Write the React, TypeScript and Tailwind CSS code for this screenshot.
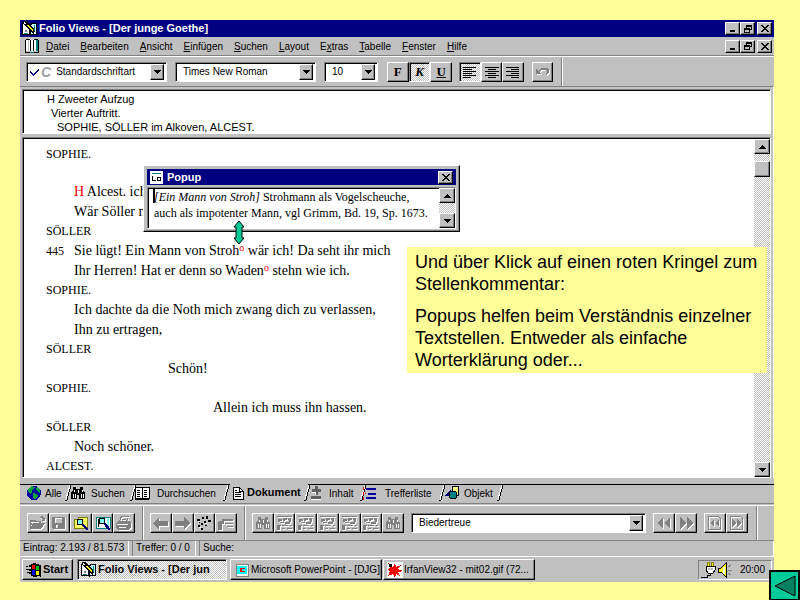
import React from 'react';
import clsx from 'clsx';

const raised = 'bg-[#c0c0c0] border border-t-white border-l-white border-r-black border-b-black shadow-[inset_-1px_-1px_0_#808080]';
const sunken = 'border border-t-[#808080] border-l-[#808080] border-r-white border-b-white shadow-[inset_1px_1px_0_#000]';
const dither = 'bg-[repeating-conic-gradient(#ffffff_0_25%,#c0c0c0_0_50%)] bg-[length:2px_2px]';

interface IconProps {
  children: React.ReactNode;
  size?: string;
  box?: string;
}

const Icon: React.FC<IconProps> = ({ children, size = 'w-4 h-4', box = '0 0 16 16' }) => (
  <svg viewBox={box} className={clsx('shrink-0', size)} shapeRendering="crispEdges" aria-hidden="true">
    {children}
  </svg>
);

const FolioIcon = () => (
  <Icon>
    <path d="M0 2h6l2 1 2-1h5v12H9l-1 1-1-1H0z" fill="#000" />
    <path d="M1 3h5l1 1v9H1z" fill="#fff" />
    <path d="M9 4l1-1h4v10H9z" fill="#c0ffff" />
    <path d="M12 4h1v8h-1zM2 12h4v1H2z" fill="#008080" />
    <path d="M1 0h3l8 8 2 6-5-3-7-8z" fill="#000" />
    <path d="M5 4l6 6M6 4l5 5" stroke="#ffff00" />
    <path d="M2 1h1v1h1v1H2zM12 11h1v2h-1z" fill="#fff" />
    <path d="M3 9h2v2H3z" fill="#808080" />
  </Icon>
);

const BookIcon = () => (
  <Icon>
    <path d="M1 3h1v11h12V3h1v12H1z" fill="#008080" />
    <path d="M2 1h5l1 2v11l-1-1H2z" fill="#fff" />
    <path d="M14 1H9L8 3v11l1-1h5z" fill="#fff" />
    <path d="M1 2h1v12H1zM2 1h4v1H2zM6 2h1v11H6zM9 2h1v11H9zM10 1h4v1h-4zM14 2h1v12h-1zM1 14h5v1H1zM10 14h5v1h-5z" fill="#000" />
    <path d="M12 2h2v11h-2z" fill="#008080" />
    <path d="M4 2h1v11H4z" fill="#c0c0c0" />
  </Icon>
);

const Globe = () => (
  <Icon>
    <circle cx="8" cy="8" r="7" fill="#0000a0" />
    <path d="M2 4l3-3 4 1-1 2-2 1v3l-2 1-2-2zM7 8l4 1 1 2-3 4-2-3zM11 2l3 3v4l-2-2-2-3z" fill="#00a040" />
  </Icon>
);

const Binoculars: React.FC<{ color?: string }> = ({ color = '#000' }) => (
  <Icon>
    <path d="M3 2h3v2h4V2h3v3l2 3v6H9v-4H7v4H1V8l2-3z" fill={color} />
    <path d="M4 5v2M12 5v2M3 9v4M5 9v4M11 9v4M13 9v4M8 5v3" stroke="#fff" />
  </Icon>
);

const OpenBook: React.FC = () => (
  <Icon>
    <path d="M1 2h6l1 1 1-1h6v11H9l-1 1-1-1H1z" fill="#fff" stroke="#000" />
    <path d="M8 3v11M3 5h3M3 7h3M3 9h3M3 11h3M10 5h3M10 7h3M10 9h3M10 11h3" stroke="#000" />
    <path d="M1 14h14v1H1z" fill="#000" />
  </Icon>
);

const PageIcon = () => (
  <Icon size="w-3 h-4" box="0 0 12 16">
    <path d="M1 2h6l4 4v8H1z" fill="#fff" stroke="#000" />
    <path d="M7 2v4h4M3 7h6M3 9h6M3 11h6M3 5h2" fill="none" stroke="#000" />
  </Icon>
);

const PlusMinus = () => (
  <Icon size="w-3 h-4" box="0 0 12 16">
    <path d="M5 1h3v3h3v3H8v3H5V7H2V4h3zM1 11h10v3H1z" fill="#606060" />
    <path d="M2 7h3v3M1 14h10" stroke="#fff" fill="none" />
  </Icon>
);

const HitList = () => (
  <Icon>
    <path d="M4 3h10v2H4zM6 8h8v2H6zM4 12h10v2H4z" fill="#0000a0" />
    <path d="M1 2v3M1 7v3M1 12v3M3 8h1" stroke="#ff0000" fill="none" />
  </Icon>
);

const Shapes = () => (
  <Icon>
    <path d="M8 1h6v9H8z" fill="#ffff80" stroke="#000" />
    <path d="M0 11l7-6v6z" fill="#000080" />
    <circle cx="9" cy="10" r="4" fill="#008080" stroke="#000" />
  </Icon>
);

const Caret = () => (
  <Icon size="w-[7px] h-1" box="0 0 7 4">
    <path d="M0 0h7v1H0zM1 1h5v1H1zM2 2h3v1H2zM3 3h1v1H3z" fill="#000" />
  </Icon>
);

const CaretUp = () => (
  <Icon size="w-[7px] h-1" box="0 0 7 4">
    <path d="M0 3h7v1H0zM1 2h5v1H1zM2 1h3v1H2zM3 0h1v1H3z" fill="#000" />
  </Icon>
);

const CloseGlyph = () => (
  <Icon size="w-2 h-[7px]" box="0 0 8 7">
    <path d="M0 0h2v1H0zM6 0h2v1H6zM1 1h2v1H1zM5 1h2v1H5zM2 2h4v1H2zM3 3h2v1H3zM2 4h4v1H2zM1 5h2v1H1zM5 5h2v1H5zM0 6h2v1H0zM6 6h2v1H6z" fill="#000" />
  </Icon>
);

const MinGlyph = () => (
  <Icon size="w-2 h-[7px]" box="0 0 8 7">
    <path d="M1 5h5v2H1z" fill="#000" />
  </Icon>
);

const RestoreGlyph = () => (
  <Icon size="w-2 h-2" box="0 0 8 8">
    <path d="M2 0h6v5H6V4h1V2H3v1H2zM0 3h6v5H0zM1 5v2h4V5z" fill="#000" fillRule="evenodd" />
  </Icon>
);

const windowButton = 'h-[13px] flex items-center justify-center';

const WindowButtons: React.FC<{ name: string }> = ({ name }) => (
  <div className="flex ml-auto mr-[2px]">
    <button aria-label={`${name} minimieren`} className={clsx(raised, windowButton, 'w-[15px]')}><MinGlyph /></button>
    <button aria-label={`${name} wiederherstellen`} className={clsx(raised, windowButton, 'w-[15px]')}><RestoreGlyph /></button>
    <button aria-label={`${name} schließen`} className={clsx(raised, windowButton, 'w-[15px] ml-[2px]')}><CloseGlyph /></button>
  </div>
);

const menus = [
  ['', 'D', 'atei'],
  ['', 'B', 'earbeiten'],
  ['', 'A', 'nsicht'],
  ['', 'E', 'infügen'],
  ['', 'S', 'uchen'],
  ['', 'L', 'ayout'],
  ['E', 'x', 'tras'],
  ['', 'T', 'abelle'],
  ['', 'F', 'enster'],
  ['', 'H', 'ilfe'],
];

interface ComboProps {
  label: string;
  value: string;
  className: string;
  prefix?: React.ReactNode;
}

const Combo: React.FC<ComboProps> = ({ label, value, className, prefix }) => (
  <div className={clsx(sunken, 'h-5 bg-white flex items-center p-[2px] text-[10px]', className)}>
    {prefix}
    <select aria-label={label} className="appearance-none flex-1 min-w-0 bg-transparent pl-[5px] leading-[14px] outline-none">
      <option>{value}</option>
    </select>
    <span className={clsx(raised, 'w-[14px] h-4 flex items-center justify-center')}><Caret /></span>
  </div>
);

interface ToolProps {
  label: string;
  pressed?: boolean;
  children: React.ReactNode;
}

const Tool: React.FC<ToolProps> = ({ label, pressed, children }) => (
  <button
    aria-label={label}
    className={clsx('flex-1 h-5 flex items-center justify-center overflow-hidden', pressed ? clsx(sunken, dither) : raised)}
  >
    {children}
  </button>
);

const Divider = () => <div className="w-[2px] self-stretch bg-[#808080] border-r border-white" />;

const AlignLines: React.FC<{ d: string }> = ({ d }) => (
  <Icon size="w-[14px] h-3" box="0 0 14 12">
    <path d={d} fill="#000" />
  </Icon>
);

// disabled buttons get the usual grey drawing with a white edge below it
const Grey: React.FC<{ d: string }> = ({ d }) => (
  <Icon>
    <path d={d} fill="#fff" transform="translate(1 1)" fillRule="evenodd" />
    <path d={d} fill="#808080" fillRule="evenodd" />
  </Icon>
);

const fileTools = [
  { label: 'Öffnen', icon: <Grey d="M0 5h5l1 1h5v2h4l-4 6H0zM2 9l-1 3 2-4h6V7H1zM9 3l3-2 2 2h1v3h-3l1-2-2-1z" /> },
  { label: 'Speichern', icon: <Grey d="M1 2h13v12H2l-1-1zM4 3v5h7V3zM5 10v3h2v-3z" /> },
  {
    label: 'Suchen',
    icon: (
      <Icon>
        <path d="M1 4h4l1-2h8v11H1z" fill="#ffff60" stroke="#808000" />
        <circle cx="7" cy="7" r="3" fill="#80ffff" stroke="#000" />
        <path d="M9 9l6 6M9 10l5 5M10 9l5 5" stroke="#000080" />
      </Icon>
    ),
  },
  {
    label: 'Im Buch suchen',
    icon: (
      <Icon>
        <path d="M1 2h6l1 1 1-1h6v11H1z" fill="#fff" stroke="#008080" />
        <path d="M3 4v8" stroke="#000" />
        <path d="M12 3h2v9h-2z" fill="#80ffff" />
        <circle cx="7" cy="6" r="3" fill="#80ffff" stroke="#000" />
        <path d="M9 8l6 7M9 9l5 6M10 8l5 6" stroke="#000080" />
      </Icon>
    ),
  },
  { label: 'Drucken', icon: <Grey d="M5 1h8l-2 5h3l1 2v4l-3 3H2l-2-2V8l3-2zM6 2L4 6h6l2-4zM1 9v1h11V9zM3 12v1h7v-1zM6 4h4v1H6z" /> },
];

const moveTools = [
  { label: 'Zurück', icon: <Grey d="M0 8l6-6v4h9v5H6v4z" /> },
  { label: 'Vor', icon: <Grey d="M15 8L9 2v4H0v5h9v4z" /> },
  {
    label: 'Spur',
    icon: (
      <Icon>
        <path d="M1 4h3v2H1zM6 2h2v2H6zM10 1h2v3h-2zM12 5h3v2h-3zM8 6h2v2H8zM5 8h2v2H5zM2 10h2v2H2zM5 13h2v2H5zM9 10h2v1H9zM3 7h1v1H3z" fill="#000" />
        <path d="M2 6h2v1H2zM9 8h2v1H9zM3 12h2v1H3z" fill="#fff" />
      </Icon>
    ),
  },
  { label: 'Sprung', icon: <Grey d="M4 4h11v2H4zM7 8h8v1H7zM9 11h6v1H9zM1 6h5v3H4v6H0V9z" /> },
];

const queryPath = 'M0 1h15v1H0zM1 4h4v2H3v1H1zM6 3h4v2H8v1H6zM11 3h3v4h-2V5h-1zM3 7h4v1H3zM8 7h5v2H8zM0 10h4v1H3v4H0zM5 10h6v1H5zM13 10h2v1h-2zM5 13h3v1H5zM10 13h5v1h-5z';
const queryTools = ['Abfrage', 'Liste', 'Feld', 'Gruppe', 'Notiz'];

const Separator = () => (
  <Icon size="w-[7px] h-4" box="0 0 7 16">
    <path d="M6 0L2 15H0" fill="none" stroke="#000" />
    <path d="M5 0L1 14" fill="none" stroke="#fff" />
  </Icon>
);

interface TabProps {
  label: string;
  icon: React.ReactNode;
  className: string;
  active?: boolean;
}

const Tab: React.FC<TabProps> = ({ label, icon, className, active }) => (
  <button
    role="tab"
    aria-selected={!!active}
    className={clsx('flex items-center whitespace-nowrap', active ? '-mt-px h-[17px] bg-[#c0c0c0]' : 'h-4', className)}
  >
    {icon}
    <span className={clsx('flex-1 text-left', active && 'font-bold text-[11px]')}>{label}</span>
    <Separator />
  </button>
);

const Speaker: React.FC<{ children: React.ReactNode }> = ({ children }) => (
  <p className="h-[19px] leading-[19px] text-[12px]">{children}</p>
);

interface VerseProps {
  indent?: string;
  number?: string;
  children: React.ReactNode;
}

const Verse: React.FC<VerseProps> = ({ indent = 'pl-0', number, children }) => (
  <p className="h-5 leading-5 flex whitespace-nowrap">
    <span className="w-7 text-[12px]">{number}</span>
    <span className={indent}>{children}</span>
  </p>
);

const NoteMark = () => <a href="#kommentar" className="text-[#ff0000] text-[10px] relative -top-1">o</a>;

const ScrollBar: React.FC<{ thumb?: boolean }> = ({ thumb }) => (
  <div className={clsx(dither, 'w-4 shrink-0 flex flex-col justify-between')}>
    <div>
      <button aria-label="Nach oben" className={clsx(raised, 'w-4 h-[15px] flex items-center justify-center')}><CaretUp /></button>
      {thumb && <div className={clsx(raised, 'w-4 h-4 mt-[7px]')} />}
    </div>
    <button aria-label="Nach unten" className={clsx(raised, 'w-4 h-[15px] flex items-center justify-center')}><Caret /></button>
  </div>
);

const Popup = () => (
  <section className={clsx(raised, 'absolute left-[123px] top-[145px] w-[317px] h-[67px] p-[3px]')}>
    <header className="h-4 bg-[#000080] text-white flex items-center px-[3px]">
      <Icon size="w-[13px] h-[13px]" box="0 0 13 13">
        <path d="M0 0h13v13H0z" fill="#fff" />
        <path d="M2 2h9v1H2z" fill="#008080" />
        <path d="M2 5h1v4h3v1H2zM7 6h4v4H7zM8 7v2h2V7z" fill="#000" fillRule="evenodd" />
      </Icon>
      <h2 className="ml-1 font-bold text-[11px]">Popup</h2>
      <button aria-label="Popup schließen" className={clsx(raised, 'ml-auto w-[15px] h-[13px] flex items-center justify-center')}>
        <CloseGlyph />
      </button>
    </header>
    <div className={clsx(sunken, 'mt-[2px] h-[42px] bg-white flex')}>
      <p className="flex-1 pl-[6px] font-['Liberation_Serif',serif] text-[12px] leading-4 whitespace-nowrap pt-px">
        <i>[Ein Mann von Stroh]</i> Strohmann als Vogelscheuche,<br />
        auch als impotenter Mann, vgl Grimm, Bd. 19, Sp. 1673.
      </p>
      <ScrollBar />
    </div>
    <span className="absolute left-[9px] top-[23px] w-[2px] h-[14px] bg-black" />
  </section>
);

const taskButton = 'h-[21px] flex items-center px-[3px] gap-px whitespace-nowrap overflow-hidden';

export default function App() {
  return (
    <main className="relative min-h-screen bg-[#ffff99] pt-5 pl-5 pr-[26px] pb-[19px] overflow-hidden font-['Liberation_Sans',sans-serif] text-[10px] text-black">
      <div className="relative bg-[#c0c0c0]">
        <header className="h-[17px] bg-[#000080] text-white flex items-center pl-[2px]">
          <FolioIcon />
          <h1 className="ml-[1px] font-bold text-[11px]">Folio Views - [Der junge Goethe]</h1>
          <WindowButtons name="Programm" />
        </header>

        <nav className="h-[18px] flex items-center pl-1">
          <BookIcon />
          <div className="flex gap-[11px] ml-[6px]">
            {menus.map(([before, key, after]) => (
              <button key={key}>{before}<u>{key}</u>{after}</button>
            ))}
          </div>
          <WindowButtons name="Dokument" />
        </nav>

        <div className="h-[31px] border-t border-[#808080] shadow-[inset_0_1px_0_#fff] flex items-center pl-[6px] pt-px">
          <Combo
            label="Formatvorlage"
            value="Standardschriftart"
            className="w-[141px]"
            prefix={
              <>
                <Icon size="w-3 h-3" box="0 0 12 12">
                  <path d="M1 5l3 3 6-6v2l-6 6-3-3z" fill="#000080" />
                </Icon>
                <span className="font-bold italic text-[14px] leading-4 text-[#a0a0a0]">C</span>
              </>
            }
          />
          <Combo label="Schriftart" value="Times New Roman" className="w-[141px] ml-2" />
          <Combo label="Schriftgröße" value="10" className="w-[54px] ml-2" />
          <div className="flex w-[65px] ml-[9px] font-['Liberation_Serif',serif] font-bold text-[13px] leading-4">
            <Tool label="Fett">F</Tool>
            <Tool label="Kursiv" pressed><i>K</i></Tool>
            <Tool label="Unterstrichen"><u>U</u></Tool>
          </div>
          <div className="flex w-[65px] ml-[7px]">
            <Tool label="Linksbündig" pressed><AlignLines d="M0 1h13v1H0zM0 3h9v1H0zM0 5h13v1H0zM0 7h9v1H0zM0 9h13v1H0zM0 11h8v1H0z" /></Tool>
            <Tool label="Zentriert"><AlignLines d="M0 1h14v1H0zM3 3h8v1H3zM0 5h14v1H0zM3 7h8v1H3zM0 9h14v1H0zM3 11h8v1H3z" /></Tool>
            <Tool label="Rechtsbündig"><AlignLines d="M0 1h13v1H0zM5 3h8v1H5zM0 5h13v1H0zM5 7h8v1H5zM0 9h13v1H0zM5 11h8v1H5z" /></Tool>
          </div>
          <div className="flex w-[21px] ml-2">
            <Tool label="Rückgängig"><Grey d="M1 5v5h5L4 8l3-2h4l1 2-1 2v1l3-2V6l-2-2H6L3 7z" /></Tool>
          </div>
          <div className="ml-2 h-full flex"><Divider /></div>
        </div>

        <div className="px-[2px] pt-[2px] border-t border-[#808080] border-r border-r-white">
          <section className={clsx(sunken, 'h-[45px] bg-white pt-[2px] text-[11px] leading-[14px]')}>
            <p className="pl-6">H Zweeter Aufzug</p>
            <p className="pl-7">Vierter Auftritt.</p>
            <p className="pl-[34px]">SOPHIE, SÖLLER im Alkoven, ALCEST.</p>
          </section>

          <section className={clsx(sunken, 'mt-[3px] bg-white flex pt-px')}>
            <article className="flex-1 pl-[23px] pt-[6px] pb-px font-['Liberation_Serif',serif] text-[14px]">
              <Speaker>SOPHIE.</Speaker>
              <div className="pt-[18px]">
                <Verse><span className="text-[#ff0000]">H</span> Alcest. ich</Verse>
                <Verse>Wär Söller m</Verse>
              </div>
              <Speaker>SÖLLER</Speaker>
              <Verse number="445">Sie lügt! Ein Mann von Stroh<NoteMark /> wär ich! Da seht ihr mich</Verse>
              <Verse>Ihr Herren! Hat er denn so Waden<NoteMark /> stehn wie ich.</Verse>
              <Speaker>SOPHIE.</Speaker>
              <Verse>Ich dachte da die Noth mich zwang dich zu verlassen,</Verse>
              <Verse>Ihn zu ertragen,</Verse>
              <Speaker>SÖLLER</Speaker>
              <Verse indent="pl-[94px]">Schön!</Verse>
              <Speaker>SOPHIE.</Speaker>
              <Verse indent="pl-[139px]">Allein ich muss ihn hassen.</Verse>
              <Speaker>SÖLLER</Speaker>
              <Verse>Noch schöner.</Verse>
              <Speaker>ALCEST.</Speaker>
            </article>
            <ScrollBar thumb />
          </section>
        </div>

        <div role="tablist" className="mt-[6px] h-5 border-t border-black border-b border-b-[#808080] flex items-start pl-[6px]">
          <Tab label="Alle" className="w-11 gap-[3px]" icon={<Globe />} />
          <Tab label="Suchen" className="w-16 gap-[5px]" icon={<Binoculars />} />
          <Tab label="Durchsuchen" className="w-[96px] gap-[7px]" icon={<OpenBook />} />
          <Tab label="Dokument" className="w-[78px] gap-[3px] pl-[2px]" icon={<PageIcon />} active />
          <Tab label="Inhalt" className="w-[54px] gap-[7px] pl-[2px]" icon={<PlusMinus />} />
          <Tab label="Trefferliste" className="w-[82px] gap-[7px]" icon={<HitList />} />
          <Tab label="Objekt" className="w-[60px] gap-1" icon={<Shapes />} />
        </div>

        <div className="mt-px h-[35px] border-t border-white flex items-center pl-[7px]">
          <div className="flex w-[108px]">
            {fileTools.map((tool) => (
              <Tool key={tool.label} label={tool.label}>{tool.icon}</Tool>
            ))}
          </div>
          <div className="ml-[7px] h-full flex"><Divider /></div>
          <div className="flex w-[87px] ml-[6px]">
            {moveTools.map((tool) => (
              <Tool key={tool.label} label={tool.label}>{tool.icon}</Tool>
            ))}
          </div>
          <div className="ml-[7px] h-full flex"><Divider /></div>
          <div className="flex w-[152px] ml-[6px]">
            <Tool label="Treffer"><Binoculars color="#808080" /></Tool>
            {queryTools.map((label) => (
              <Tool key={label} label={label}><Grey d={queryPath} /></Tool>
            ))}
            <Tool label="Treffer löschen"><Binoculars color="#808080" /></Tool>
          </div>
          <Combo label="Treffer wählen" value="Biedertreue" className="flex-1 ml-[7px]" />
          <div className="flex w-11 ml-[7px]">
            <Tool label="Voriger Treffer"><Grey d="M7 2v12L1 8zM14 2v12L8 8z" /></Tool>
            <Tool label="Nächster Treffer"><Grey d="M2 2v12l6-6zM9 2v12l6-6z" /></Tool>
          </div>
          <div className="flex w-11 ml-[7px]">
            <Tool label="Vorige Seite"><Grey d="M1 1h10l3 3v11H1zM2 2v12h11V4l-2-2zM7 4v8L3 8zM12 4v8L8 8z" /></Tool>
            <Tool label="Nächste Seite"><Grey d="M1 1h10l3 3v11H1zM2 2v12h11V4l-2-2zM3 4v8l4-4zM8 4v8l4-4z" /></Tool>
          </div>
          <div className="ml-2 mr-4 h-full flex"><Divider /></div>
        </div>

        <footer className="h-4 border-t border-[#808080] flex gap-[3px] text-[10px] leading-[14px]">
          <span className="w-[109px] pl-[3px] border-r border-white">Eintrag: 2.193 / 81.573</span>
          <span className="w-[64px] pl-[3px] border-l border-l-[#808080] border-r border-r-white">Treffer: 0 / 0</span>
          <span className="flex-1 pl-[3px] border-l border-l-[#808080] border-r border-r-white">Suche:</span>
        </footer>

        <div className="h-[26px] border-t border-white flex items-center pl-[2px] pr-[2px]">
          <button className={clsx(raised, taskButton, 'w-[51px] font-bold text-[11px]')}>
            <Icon>
              <path d="M0 4h2v1H0zM0 7h3v1H0zM1 10h2v1H1zM3 3h2v2H3zM3 7h2v2H3zM3 10h2v2H3z" fill="#000" />
              <path d="M5 2l3-1 7 2v12l-3-1-3 1-4-1z" fill="#000" />
              <path d="M6 3h3v4H6z" fill="#ff0000" />
              <path d="M10 4h3v4h-3z" fill="#00c000" />
              <path d="M6 8h3v5H6z" fill="#0000ff" />
              <path d="M10 9h3v4h-3z" fill="#ffff00" />
            </Icon>
            Start
          </button>
          <button className={clsx(sunken, dither, taskButton, 'w-[150px] ml-1 font-bold text-[11px]')}>
            <FolioIcon />Folio Views - [Der jun
          </button>
          <button className={clsx(raised, taskButton, 'w-[152px] ml-[3px]')}>
            <Icon>
              <path d="M2 2h12v12H2z" fill="#fff" stroke="#808080" />
              <path d="M3 4h10v8H3z" fill="#00ffff" />
              <path d="M6 6h5v1H8v2h3v1H6z" fill="#ff0000" />
            </Icon>
            Microsoft PowerPoint - [DJG]
          </button>
          <button className={clsx(raised, taskButton, 'w-[152px] ml-px')}>
            <Icon>
              <path d="M0 0h16v16H0z" fill="#fff" />
              <path d="M1 1l5 4 2-4 1 4 5-2-3 4 5 2-5 1 2 4-4-2-1 4-2-4-5 2 2-5-3-2 3-1z" fill="#ff0000" />
              <path d="M2 2h3v3H2z" fill="#000" />
            </Icon>
            IrfanView32 - mit02.gif (72...
          </button>
          <div className="ml-auto w-[74px] h-5 border border-t-[#808080] border-l-[#808080] border-r-white border-b-white flex items-center pl-[2px]">
            <Icon>
              <path d="M6 0h2v4H6zM10 0h2v4h-2z" fill="#ffff00" stroke="#808000" />
              <path d="M5 4h9v4l-2 3H7L5 8z" fill="#fff" stroke="#000" />
              <path d="M9 11v2H6v2H0" fill="none" stroke="#000" />
              <path d="M7 6h5v2H7z" fill="#c0c0c0" />
            </Icon>
            <Icon>
              <path d="M1 6h3l5-5v14l-5-5H1z" fill="#ffff00" stroke="#000" />
              <path d="M6 5h2v7H6z" fill="#fff" />
              <path d="M11 5l3-2M11 8h4M11 11l3 2" stroke="#808080" />
            </Icon>
            <time className="ml-auto mr-[6px]">20:00</time>
          </div>
        </div>

        <Popup />

        <svg viewBox="0 0 12 25" className="absolute left-[213px] top-[200px] w-3 h-[25px]" aria-hidden="true">
          <path d="M6 1l5 6H9v11h2l-5 6-5-6h2V7H1z" fill="#00cc99" stroke="#000" />
        </svg>

        <aside className="absolute left-[387px] top-[227px] w-[360px] h-[126px] bg-[#ffff99] pl-2 pt-1 text-[18px] leading-[22px]">
          <p>Und über Klick auf einen roten Kringel zum Stellenkommentar:</p>
          <p className="mt-[10px]">Popups helfen beim Verständnis einzelner Textstellen. Entweder als einfache Worterklärung oder...</p>
        </aside>
      </div>

      <button aria-label="Zurück" className="absolute right-0 bottom-0 w-[31px] h-[31px] bg-[#00cc99] border-2 border-black">
        <svg viewBox="0 0 27 27" className="w-[27px] h-[27px]" aria-hidden="true">
          <path d="M4 14L24 4v20z" fill="#008060" stroke="#000" />
        </svg>
      </button>
    </main>
  );
}
